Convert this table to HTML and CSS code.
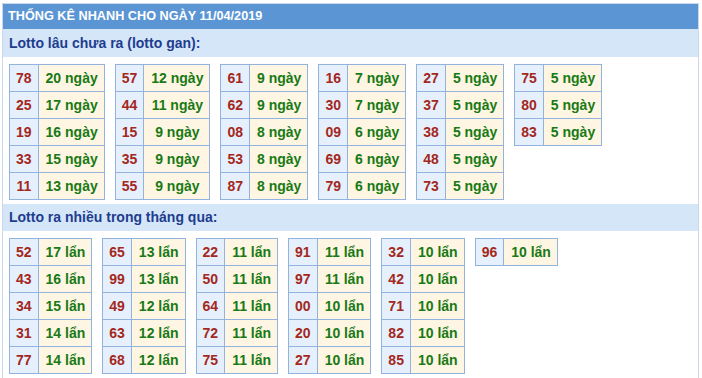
FILE: index.html
```html
<!DOCTYPE html>
<html lang="vi">
<head>
<meta charset="utf-8">
<title>Thống kê nhanh</title>
<link rel="stylesheet" href="styles.css">
</head>
<body>
<div class="box">
  <div class="title">THỐNG KÊ NHANH CHO NGÀY 11/04/2019</div>
  <div class="sub sub-first">Lotto lâu chưa ra (lotto gan):</div>
  <div class="groups">
    <table class="grid"><tr><td class="n">78</td><td class="v">20 ngày</td></tr><tr><td class="n">25</td><td class="v">17 ngày</td></tr><tr><td class="n">19</td><td class="v">16 ngày</td></tr><tr><td class="n">33</td><td class="v">15 ngày</td></tr><tr><td class="n">11</td><td class="v">13 ngày</td></tr></table>
    <table class="grid"><tr><td class="n">57</td><td class="v">12 ngày</td></tr><tr><td class="n">44</td><td class="v">11 ngày</td></tr><tr><td class="n">15</td><td class="v">9 ngày</td></tr><tr><td class="n">35</td><td class="v">9 ngày</td></tr><tr><td class="n">55</td><td class="v">9 ngày</td></tr></table>
    <table class="grid"><tr><td class="n">61</td><td class="v">9 ngày</td></tr><tr><td class="n">62</td><td class="v">9 ngày</td></tr><tr><td class="n">08</td><td class="v">8 ngày</td></tr><tr><td class="n">53</td><td class="v">8 ngày</td></tr><tr><td class="n">87</td><td class="v">8 ngày</td></tr></table>
    <table class="grid"><tr><td class="n">16</td><td class="v">7 ngày</td></tr><tr><td class="n">30</td><td class="v">7 ngày</td></tr><tr><td class="n">09</td><td class="v">6 ngày</td></tr><tr><td class="n">69</td><td class="v">6 ngày</td></tr><tr><td class="n">79</td><td class="v">6 ngày</td></tr></table>
    <table class="grid"><tr><td class="n">27</td><td class="v">5 ngày</td></tr><tr><td class="n">37</td><td class="v">5 ngày</td></tr><tr><td class="n">38</td><td class="v">5 ngày</td></tr><tr><td class="n">48</td><td class="v">5 ngày</td></tr><tr><td class="n">73</td><td class="v">5 ngày</td></tr></table>
    <table class="grid"><tr><td class="n">75</td><td class="v">5 ngày</td></tr><tr><td class="n">80</td><td class="v">5 ngày</td></tr><tr><td class="n">83</td><td class="v">5 ngày</td></tr></table>
  </div>
  <div class="sub">Lotto ra nhiều trong tháng qua:</div>
  <div class="groups">
    <table class="grid"><tr><td class="n">52</td><td class="v">17 lẩn</td></tr><tr><td class="n">43</td><td class="v">16 lẩn</td></tr><tr><td class="n">34</td><td class="v">15 lẩn</td></tr><tr><td class="n">31</td><td class="v">14 lẩn</td></tr><tr><td class="n">77</td><td class="v">14 lẩn</td></tr></table>
    <table class="grid"><tr><td class="n">65</td><td class="v">13 lẩn</td></tr><tr><td class="n">99</td><td class="v">13 lẩn</td></tr><tr><td class="n">49</td><td class="v">12 lẩn</td></tr><tr><td class="n">63</td><td class="v">12 lẩn</td></tr><tr><td class="n">68</td><td class="v">12 lẩn</td></tr></table>
    <table class="grid"><tr><td class="n">22</td><td class="v">11 lẩn</td></tr><tr><td class="n">50</td><td class="v">11 lẩn</td></tr><tr><td class="n">64</td><td class="v">11 lẩn</td></tr><tr><td class="n">72</td><td class="v">11 lẩn</td></tr><tr><td class="n">75</td><td class="v">11 lẩn</td></tr></table>
    <table class="grid"><tr><td class="n">91</td><td class="v">11 lẩn</td></tr><tr><td class="n">97</td><td class="v">11 lẩn</td></tr><tr><td class="n">00</td><td class="v">10 lẩn</td></tr><tr><td class="n">20</td><td class="v">10 lẩn</td></tr><tr><td class="n">27</td><td class="v">10 lẩn</td></tr></table>
    <table class="grid"><tr><td class="n">32</td><td class="v">10 lẩn</td></tr><tr><td class="n">42</td><td class="v">10 lẩn</td></tr><tr><td class="n">71</td><td class="v">10 lẩn</td></tr><tr><td class="n">82</td><td class="v">10 lẩn</td></tr><tr><td class="n">85</td><td class="v">10 lẩn</td></tr></table>
    <table class="grid"><tr><td class="n">96</td><td class="v">10 lẩn</td></tr></table>
  </div>
</div>
</body>
</html>
```

FILE: styles.css
```css
html, body {
  margin: 0;
  padding: 0;
  background: #ffffff;
}
body {
  font-family: "Liberation Sans", Arial, sans-serif;
}
.box {
  margin: 3px 3px 0 2px;
  border: 1px solid #c9d8ea;
  border-bottom: none;
  min-height: 380px;
}
.title {
  background: #5b95d4;
  color: #ffffff;
  font-weight: bold;
  font-size: 12.7px;
  height: 25px;
  line-height: 25px;
  padding-left: 5px;
}
.sub {
  background: #d5e6f8;
  color: #1e3d8f;
  font-weight: bold;
  font-size: 14px;
  height: 27px;
  line-height: 27px;
  padding-left: 6px;
  margin-top: 4px;
}
.sub-first {
  margin-top: 0;
  height: 28px;
  line-height: 28px;
}
.groups {
  display: flex;
  align-items: flex-start;
  gap: 10px;
  padding: 7px 0 0 6px;
}
.grid {
  border-collapse: collapse;
  font-size: 14px;
  font-weight: bold;
}
.grid td {
  border: 1px solid #93b3df;
  height: 26px;
  padding: 0;
  white-space: nowrap;
  text-align: center;
}
.grid .n {
  background: #e6f0fc;
  color: #a3281d;
  padding: 0 6px;
}
.grid .v {
  background: #fff5e3;
  color: #187a14;
  padding: 0 6px 0 7px;
}
```
